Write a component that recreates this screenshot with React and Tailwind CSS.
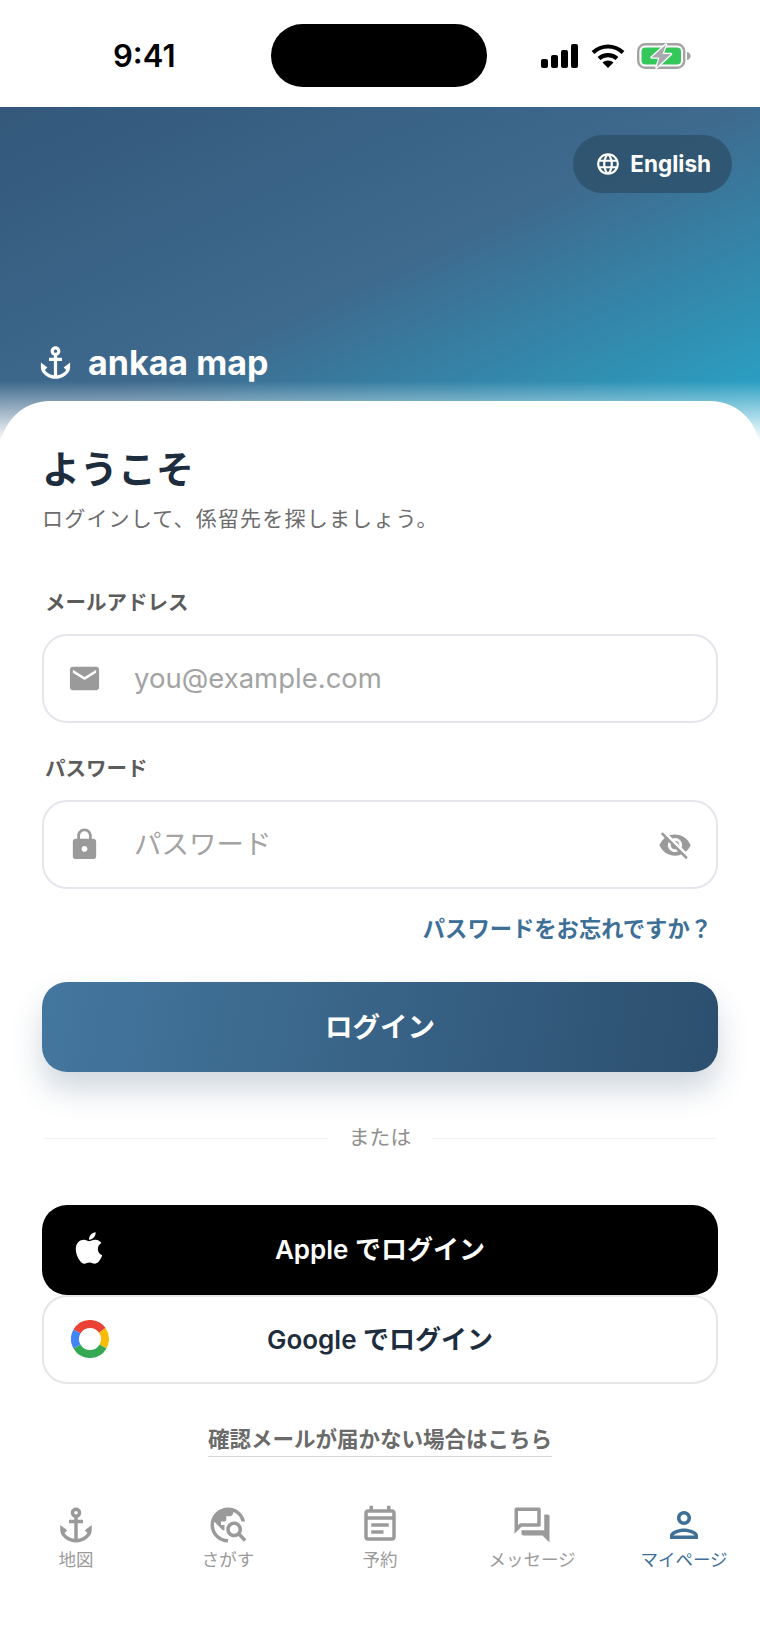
import React from "react";
import { FaApple } from "react-icons/fa";
import {
  MdAnchor,
  MdMail,
  MdLock,
  MdVisibilityOff,
  MdLanguage,
  MdTravelExplore,
  MdOutlineEventNote,
  MdOutlineQuestionAnswer,
  MdOutlinePerson,
} from "react-icons/md";

const FONT = "font-['Inter','Noto_Sans_CJK_JP',sans-serif]";

const StatusIcons = () => (
  <div className="flex items-center gap-[12px]">
    <svg width="38" height="24" viewBox="0 0 38 24" fill="#000">
      <rect x="0" y="15" width="7" height="9" rx="2" />
      <rect x="10" y="11" width="7" height="13" rx="2" />
      <rect x="20" y="6" width="7" height="18" rx="2" />
      <rect x="30" y="0" width="7" height="24" rx="2" />
    </svg>
    <svg width="34" height="24" viewBox="0 0 34 24" fill="none" stroke="#000" strokeWidth="4.2">
      <path d="M2 8.5C11 0.5 23 0.5 32 8.5" />
      <path d="M8 14.5C13 10 21 10 26 14.5" />
      <path d="M17 24L11.5 18.5C14.5 15.8 19.5 15.8 22.5 18.5Z" fill="#000" stroke="none" />
    </svg>
    <svg width="54" height="26" viewBox="0 0 54 26">
      <rect x="1.2" y="1.2" width="46" height="23.6" rx="7" fill="none" stroke="#a3a3a3" strokeWidth="2.4" />
      <rect x="4.5" y="4.5" width="39.5" height="17" rx="4" fill="#34c759" />
      <path d="M50 9c2.4.6 3.6 2 3.6 4s-1.2 3.4-3.6 4z" fill="#a3a3a3" />
      <path
        d="M29 1.500L14.500 14.500h8l-3 10L34 11h-8.500z"
        fill="#a8a8ad"
        stroke="#fff"
        strokeWidth="2.500"
        strokeLinejoin="round"
        paintOrder="stroke"
      />
    </svg>
  </div>
);

const Field = ({ label, mt, children }) => (
  <div className={mt}>
    <div className="pl-[3px] text-[20.5px] leading-[26px] font-bold text-[#5c5c5c]">{label}</div>
    <div className="mt-[18px] flex h-[89px] items-center rounded-[25px] border-[2.5px] border-[#e4e6ec] bg-white pl-[23px] pr-[24px]">
      {children}
    </div>
  </div>
);

const GoogleRing = () => (
  <svg width="38" height="38" viewBox="0 0 38 38" fill="none" strokeWidth="8">
    <path d="M6 11.500A15 15 0 0 1 31.300 10.400" stroke="#ea4335" />
    <path d="M31.300 10.400A15 15 0 0 1 32 26.500" stroke="#fbbc05" />
    <path d="M32 26.500A15 15 0 0 1 6 26.500" stroke="#34a853" />
    <path d="M6 26.500A15 15 0 0 1 6 11.500" stroke="#4285f4" />
  </svg>
);

const NAV = [
  { label: "地図", Icon: MdAnchor },
  { label: "さがす", Icon: MdTravelExplore },
  { label: "予約", Icon: MdOutlineEventNote },
  { label: "メッセージ", Icon: MdOutlineQuestionAnswer },
  { label: "マイページ", Icon: MdOutlinePerson, active: true },
];

export default function App() {
  return (
    <div className={`${FONT} flex h-[1651px] w-[760px] flex-col overflow-hidden bg-white`}>
      {/* Status bar */}
      <div className="flex h-[107px] shrink-0 items-center justify-between pl-[113px] pr-[69px] pt-[4px]">
        <span className="w-[103px] text-[31px] font-semibold leading-none text-black">9:41</span>
        <div className="-mt-[1px] h-[63px] w-[216px] rounded-full bg-black" />
        <StatusIcons />
      </div>

      {/* Hero */}
      <div className="h-[334px] shrink-0 bg-[linear-gradient(to_bottom,transparent_0%,transparent_82%,#ffffff_100%),linear-gradient(155deg,#33587a_0%,#3e6a8e_50%,#27a9cc_100%)] pl-[36px] pr-[28px] pt-[28px]">
        <div className="flex justify-end">
          <div className="flex h-[58px] items-center gap-[9px] rounded-full bg-[#2f536e]/90 pl-[22px] pr-[21px] text-white">
            <MdLanguage size={26} />
            <span className="text-[22.5px] font-bold">English</span>
          </div>
        </div>
        <div className="mt-[150px] flex items-center gap-[13px] text-white">
          <MdAnchor size={39} />
          <span className="text-[34px] font-bold leading-none">ankaa map</span>
        </div>
      </div>

      {/* Card */}
      <div className="-mt-[40px] flex-1 rounded-t-[50px] bg-white px-[42px] pt-[44px]">
        <h1 className="text-[38px] font-bold leading-[48px] text-[#1d2d3d]">ようこそ</h1>
        <p className="mt-[12px] text-[21px] leading-[28px] tracking-[1.2px] text-[#6c6c6c]">
          ログインして、係留先を探しましょう。
        </p>

        <Field label="メールアドレス" mt="mt-[57px]">
          <MdMail size={35} className="shrink-0 text-[#9a9a9a]" />
          <input
            readOnly
            placeholder="you@example.com"
            className="ml-[32px] w-full bg-transparent text-[27.5px] outline-none placeholder:text-[#a3a3a3]"
          />
        </Field>

        <Field label="パスワード" mt="mt-[33px]">
          <MdLock size={35} className="shrink-0 text-[#9a9a9a]" />
          <input
            readOnly
            placeholder="パスワード"
            className="ml-[32px] w-full bg-transparent text-[27.5px] outline-none placeholder:text-[#a3a3a3]"
          />
          <MdVisibilityOff size={34} className="shrink-0 text-[#9a9a9a]" />
        </Field>

        <div className="mt-[25px] pr-[6px] text-right text-[22.3px] font-bold leading-[30px] text-[#3d6f97]">
          パスワードをお忘れですか？
        </div>

        <button className="mt-[38px] flex h-[90px] w-full items-center justify-center rounded-[25px] bg-[linear-gradient(100deg,#44779f_0%,#2c4f6e_100%)] pt-[2px] text-[27.5px] font-bold text-white shadow-[0_18px_30px_rgba(44,79,110,0.22)]">
          ログイン
        </button>

        <div className="mx-[2px] mt-[52px] flex items-center">
          <div className="h-px flex-1 bg-[#f3f3f3]" />
          <span className="px-[21px] text-[20.8px] leading-[28px] text-[#8f8f8f]">または</span>
          <div className="h-px flex-1 bg-[#f3f3f3]" />
        </div>

        <button className="relative mt-[53px] flex h-[90px] w-full items-center justify-center rounded-[25px] bg-black pb-[1px] text-[26px] font-semibold text-white">
          <FaApple size={36} className="absolute left-[29px] top-[25px]" />
          Apple でログイン
        </button>
        <button className="relative flex h-[89px] w-full items-center justify-center rounded-[25px] border-[2.5px] border-[#e4e6e8] bg-white pb-[1px] text-[26px] font-semibold text-[#1d2d3d]">
          <span className="absolute left-[27px] top-[23px] flex">
            <GoogleRing />
          </span>
          Google でログイン
        </button>

        <div className="mt-[40px] flex justify-center">
          <span className="border-b border-[#d8d8d8] pb-[2px] text-[21.5px] font-semibold leading-[30px] text-[#6a6a6a]">
            確認メールが届かない場合はこちら
          </span>
        </div>

        {/* Tab bar */}
        <nav className="-mx-[42px] mt-[47px] grid grid-cols-5">
          {NAV.map(({ label, Icon, active }) => (
            <div
              key={label}
              className={`flex flex-col items-center ${active ? "text-[#3d6f97]" : "text-[#9a9a9a]"}`}
            >
              <Icon size={42} />
              <span className="mt-[2px] text-[17.5px] leading-[24px]">{label}</span>
            </div>
          ))}
        </nav>
      </div>
    </div>
  );
}
